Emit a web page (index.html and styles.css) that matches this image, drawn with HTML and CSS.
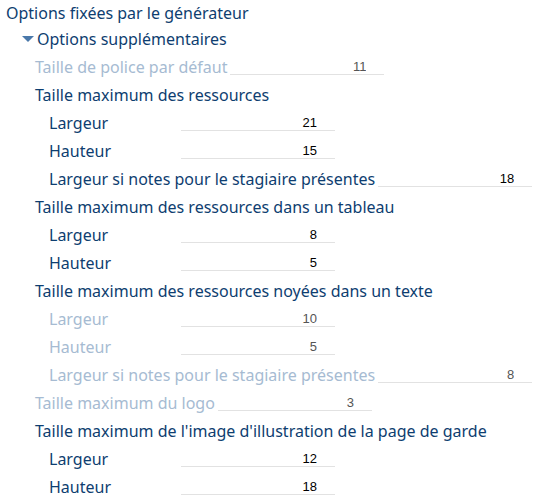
FILE: index.html
```html
<!DOCTYPE html>
<html lang="fr">
<head>
<meta charset="utf-8">
<title>Options fixées par le générateur</title>
<link rel="stylesheet" href="styles.css">
</head>
<body>
<div class="tree">
    <div class="row top">Options fixées par le générateur</div>
    <div class="row group"><span class="caret"></span>Options supplémentaires</div>

    <div class="row lvl2 off"><label>Taille de police par défaut</label><input type="text" value="11" disabled></div>

    <div class="row lvl2">Taille maximum des ressources</div>
    <div class="row lvl3"><label>Largeur</label><input type="text" value="21"></div>
    <div class="row lvl3"><label>Hauteur</label><input type="text" value="15"></div>
    <div class="row lvl3"><label>Largeur si notes pour le stagiaire présentes</label><input type="text" value="18"></div>

    <div class="row lvl2">Taille maximum des ressources dans un tableau</div>
    <div class="row lvl3"><label>Largeur</label><input type="text" value="8"></div>
    <div class="row lvl3"><label>Hauteur</label><input type="text" value="5"></div>

    <div class="row lvl2">Taille maximum des ressources noyées dans un texte</div>
    <div class="row lvl3 off"><label>Largeur</label><input type="text" value="10" disabled></div>
    <div class="row lvl3 off"><label>Hauteur</label><input type="text" value="5" disabled></div>
    <div class="row lvl3 off"><label>Largeur si notes pour le stagiaire présentes</label><input type="text" value="8" disabled></div>

    <div class="row lvl2 off"><label>Taille maximum du logo</label><input type="text" value="3" disabled></div>

    <div class="row lvl2">Taille maximum de l'image d'illustration de la page de garde</div>
    <div class="row lvl3"><label>Largeur</label><input type="text" value="12"></div>
    <div class="row lvl3"><label>Hauteur</label><input type="text" value="18"></div>
</div>
</body>
</html>
```

FILE: styles.css
```css
body {
    margin: 0;
    background: #fff;
    font-family: "Noto Sans", "Open Sans", sans-serif;
    font-size: 16px;
    color: #0e3e70;
}

.tree {
    padding: 0 0 0 6px;
}

.row {
    display: flex;
    align-items: center;
    height: 28px;
    white-space: nowrap;
}

.row.top {
    height: 25px;
}

.group {
    padding-left: 16px;
}

.caret {
    width: 0;
    height: 0;
    margin-right: 3px;
    border-left: 6px solid transparent;
    border-right: 6px solid transparent;
    border-top: 6px solid #4a78aa;
}

.lvl2 {
    padding-left: 29px;
}

.lvl3 {
    padding-left: 43px;
}

.row label {
    min-width: 129px;
    margin-right: 3px;
}

.row input {
    align-self: flex-start;
    width: 154px;
    box-sizing: border-box;
    height: 16px;
    margin-top: 6px;
    padding: 0 18px 0 0;
    border: none;
    border-bottom: 1px solid #e2e2e2;
    background: transparent;
    text-align: right;
    font-family: "Liberation Sans", Arial, sans-serif;
    font-size: 13px;
    color: #000;
    outline: none;
}

.off {
    color: #a6bbd2;
}

.off input {
    color: #555;
}
```
